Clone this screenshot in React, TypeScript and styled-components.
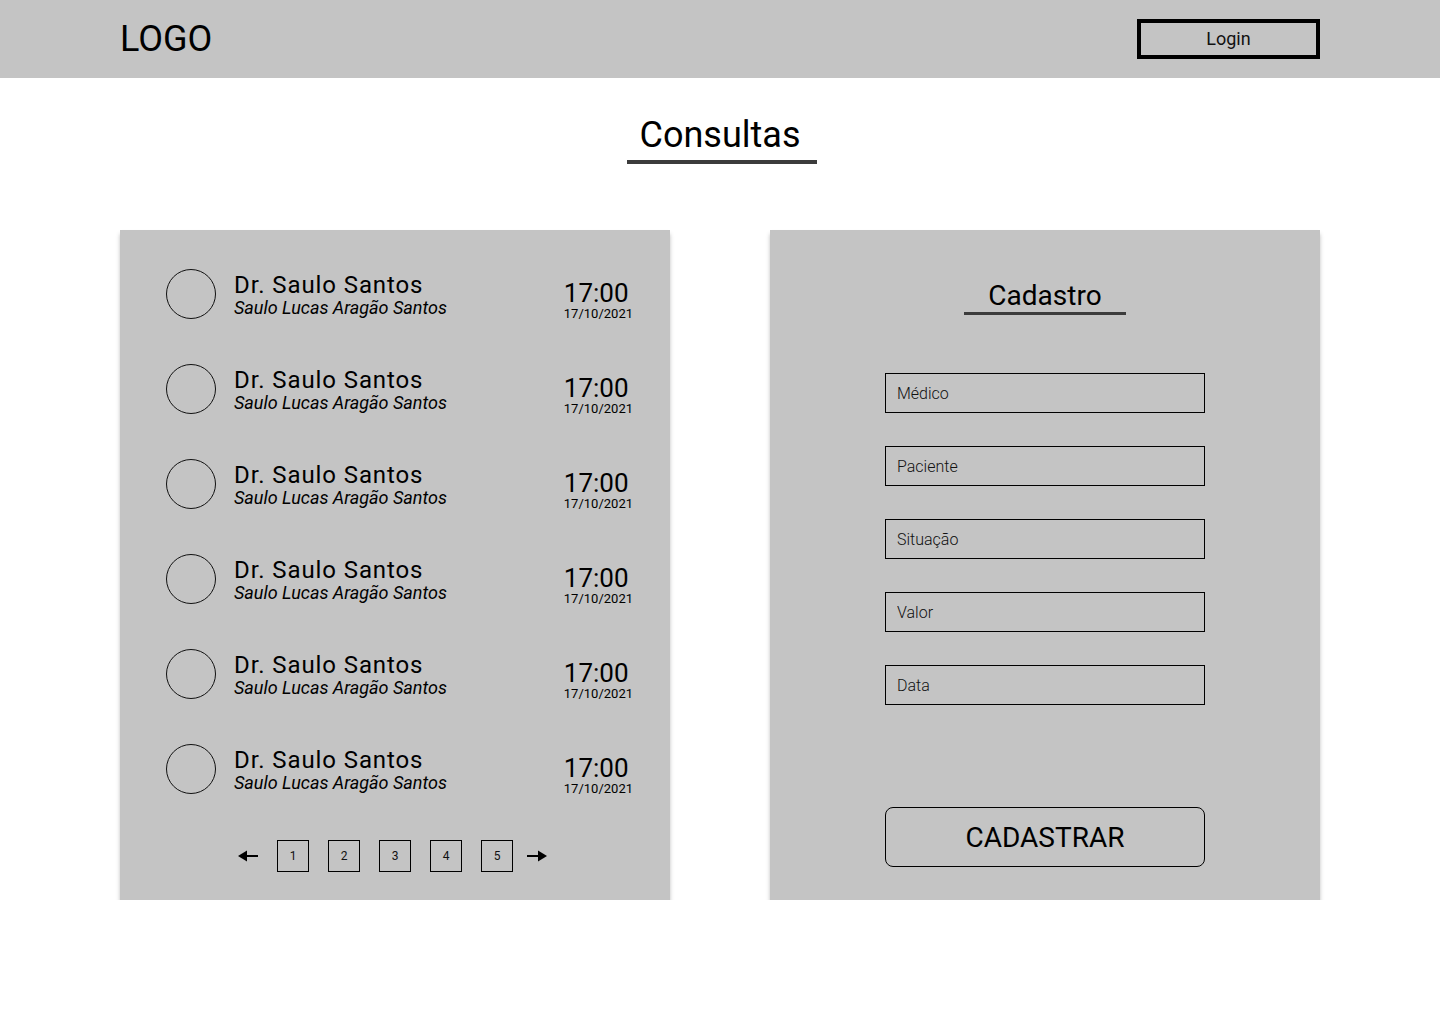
import React from "react";
import styled, { createGlobalStyle } from "styled-components";

const GlobalStyle = createGlobalStyle`
  * { box-sizing: border-box; }
  html, body { margin: 0; padding: 0; background: #ffffff; }
  body { font-family: Roboto, "Liberation Sans", Arial, sans-serif; color: #000; }
`;

const Header = styled.header`
  height: 78px;
  background: #c4c4c4;
`;

const HeaderInner = styled.div`
  width: 1200px;
  height: 100%;
  margin: 0 auto;
  display: flex;
  align-items: center;
  justify-content: space-between;
`;

const Logo = styled.div`
  font-size: 36px;
  line-height: 42px;
  font-weight: 400;
`;

const LoginButton = styled.button`
  width: 183px;
  height: 40px;
  border: 4px solid #000;
  background: transparent;
  font-family: Roboto, "Liberation Sans", Arial, sans-serif;
  font-size: 18px;
  line-height: 20px;
  color: #111;
  padding: 0 0 1px;
  cursor: pointer;
`;

const Main = styled.main`
  width: 1200px;
  margin: 0 auto;
  display: flex;
  flex-direction: column;
  align-items: center;
`;

const PageTitle = styled.h1`
  margin: 36px 0 0 4px;
  padding: 0 17px 3px 13px;
  font-size: 36px;
  line-height: 43px;
  font-weight: 400;
  border-bottom: 4px solid #3c3c3c;
`;

const Panels = styled.div`
  width: 100%;
  margin-top: 66px;
  display: flex;
  justify-content: space-between;
`;

const Panel = styled.section`
  width: 550px;
  height: 670px;
  background: #c4c4c4;
  box-shadow: 0 4px 4px rgba(0, 0, 0, 0.25);
  display: flex;
  flex-direction: column;
`;

const ListPanel = styled(Panel)`
  padding: 39px 0 28px;
`;

const RowList = styled.ul`
  list-style: none;
  margin: 0;
  padding: 0;
  display: flex;
  flex-direction: column;
  gap: 45px;
`;

const Row = styled.li`
  display: grid;
  grid-template-columns: 50px 1fr auto;
  column-gap: 18px;
  align-items: start;
  padding: 0 37px 0 46px;
  height: 50px;
`;

const Avatar = styled.div`
  width: 50px;
  height: 50px;
  border-radius: 50%;
  border: 1px solid #111;
`;

const NameBlock = styled.div`
  padding-top: 3px;
  display: flex;
  flex-direction: column;
`;

const DoctorName = styled.span`
  font-size: 24px;
  line-height: 26px;
  letter-spacing: 0.9px;
`;

const PatientName = styled.span`
  font-size: 18px;
  line-height: 20px;
  font-style: italic;
`;

const TimeBlock = styled.div`
  padding-top: 10px;
  display: flex;
  flex-direction: column;
`;

const Time = styled.span`
  font-size: 26px;
  line-height: 28px;
`;

const DateText = styled.span`
  font-size: 13px;
  line-height: 14px;
`;

const Pagination = styled.nav`
  margin-top: auto;
  padding-left: 118px;
  display: flex;
  align-items: center;
  gap: 19px;
`;

const PageBox = styled.button`
  width: 32px;
  height: 32px;
  border: 1px solid #000;
  background: transparent;
  padding: 0;
  font-family: Roboto, "Liberation Sans", Arial, sans-serif;
  font-size: 12px;
  color: #111;
  cursor: pointer;
`;

const ArrowButton = styled.button<{ $tight?: boolean }>`
  width: 20px;
  height: 32px;
  padding: 0;
  margin-left: ${(p) => (p.$tight ? "-5px" : "0")};
  border: none;
  background: transparent;
  display: flex;
  align-items: center;
  justify-content: center;
  cursor: pointer;
`;

const FormPanel = styled(Panel)`
  padding: 49px 0 33px;
  align-items: center;
`;

const FormTitle = styled.h2`
  margin: 0;
  padding: 0 24px;
  font-size: 28px;
  line-height: 33px;
  font-weight: 400;
  border-bottom: 3px solid #3c3c3c;
`;

const Fields = styled.div`
  margin-top: 58px;
  display: flex;
  flex-direction: column;
  gap: 33px;
`;

const Field = styled.input`
  width: 320px;
  height: 40px;
  border: 1px solid #000;
  background: transparent;
  padding: 0 11px;
  font-family: Roboto, "Liberation Sans", Arial, sans-serif;
  font-size: 16px;
  font-weight: 300;
  color: #000;
  outline: none;
  &::placeholder {
    color: #111;
    opacity: 1;
  }
`;

const SubmitButton = styled.button`
  margin-top: auto;
  width: 320px;
  height: 60px;
  border: 1px solid #000;
  border-radius: 8px;
  background: transparent;
  font-family: Roboto, "Liberation Sans", Arial, sans-serif;
  font-size: 28px;
  color: #000;
  cursor: pointer;
`;

const Arrow: React.FC<{ dir: "left" | "right" }> = ({ dir }) => (
  <svg width="20" height="12" viewBox="0 0 20 12" aria-hidden="true">
    {dir === "left" ? (
      <>
        <polygon points="0,6 9,0.5 9,11.5" fill="#000" />
        <rect x="8" y="5" width="12" height="2" fill="#000" />
      </>
    ) : (
      <>
        <polygon points="20,6 11,0.5 11,11.5" fill="#000" />
        <rect x="0" y="5" width="12" height="2" fill="#000" />
      </>
    )}
  </svg>
);

const consultas = Array.from({ length: 6 }, (_, i) => ({
  id: i,
  doctor: "Dr. Saulo Santos",
  patient: "Saulo Lucas Aragão Santos",
  time: "17:00",
  date: "17/10/2021",
}));

const fields = ["Médico", "Paciente", "Situação", "Valor", "Data"];

export default function App() {
  return (
    <>
      <GlobalStyle />
      <Header>
        <HeaderInner>
          <Logo>LOGO</Logo>
          <LoginButton>Login</LoginButton>
        </HeaderInner>
      </Header>
      <Main>
        <PageTitle>Consultas</PageTitle>
        <Panels>
          <ListPanel>
            <RowList>
              {consultas.map((c) => (
                <Row key={c.id}>
                  <Avatar />
                  <NameBlock>
                    <DoctorName>{c.doctor}</DoctorName>
                    <PatientName>{c.patient}</PatientName>
                  </NameBlock>
                  <TimeBlock>
                    <Time>{c.time}</Time>
                    <DateText>{c.date}</DateText>
                  </TimeBlock>
                </Row>
              ))}
            </RowList>
            <Pagination>
              <ArrowButton aria-label="Anterior">
                <Arrow dir="left" />
              </ArrowButton>
              {[1, 2, 3, 4, 5].map((n) => (
                <PageBox key={n}>{n}</PageBox>
              ))}
              <ArrowButton $tight aria-label="Próximo">
                <Arrow dir="right" />
              </ArrowButton>
            </Pagination>
          </ListPanel>
          <FormPanel>
            <FormTitle>Cadastro</FormTitle>
            <Fields>
              {fields.map((f) => (
                <Field key={f} placeholder={f} />
              ))}
            </Fields>
            <SubmitButton>CADASTRAR</SubmitButton>
          </FormPanel>
        </Panels>
      </Main>
    </>
  );
}
